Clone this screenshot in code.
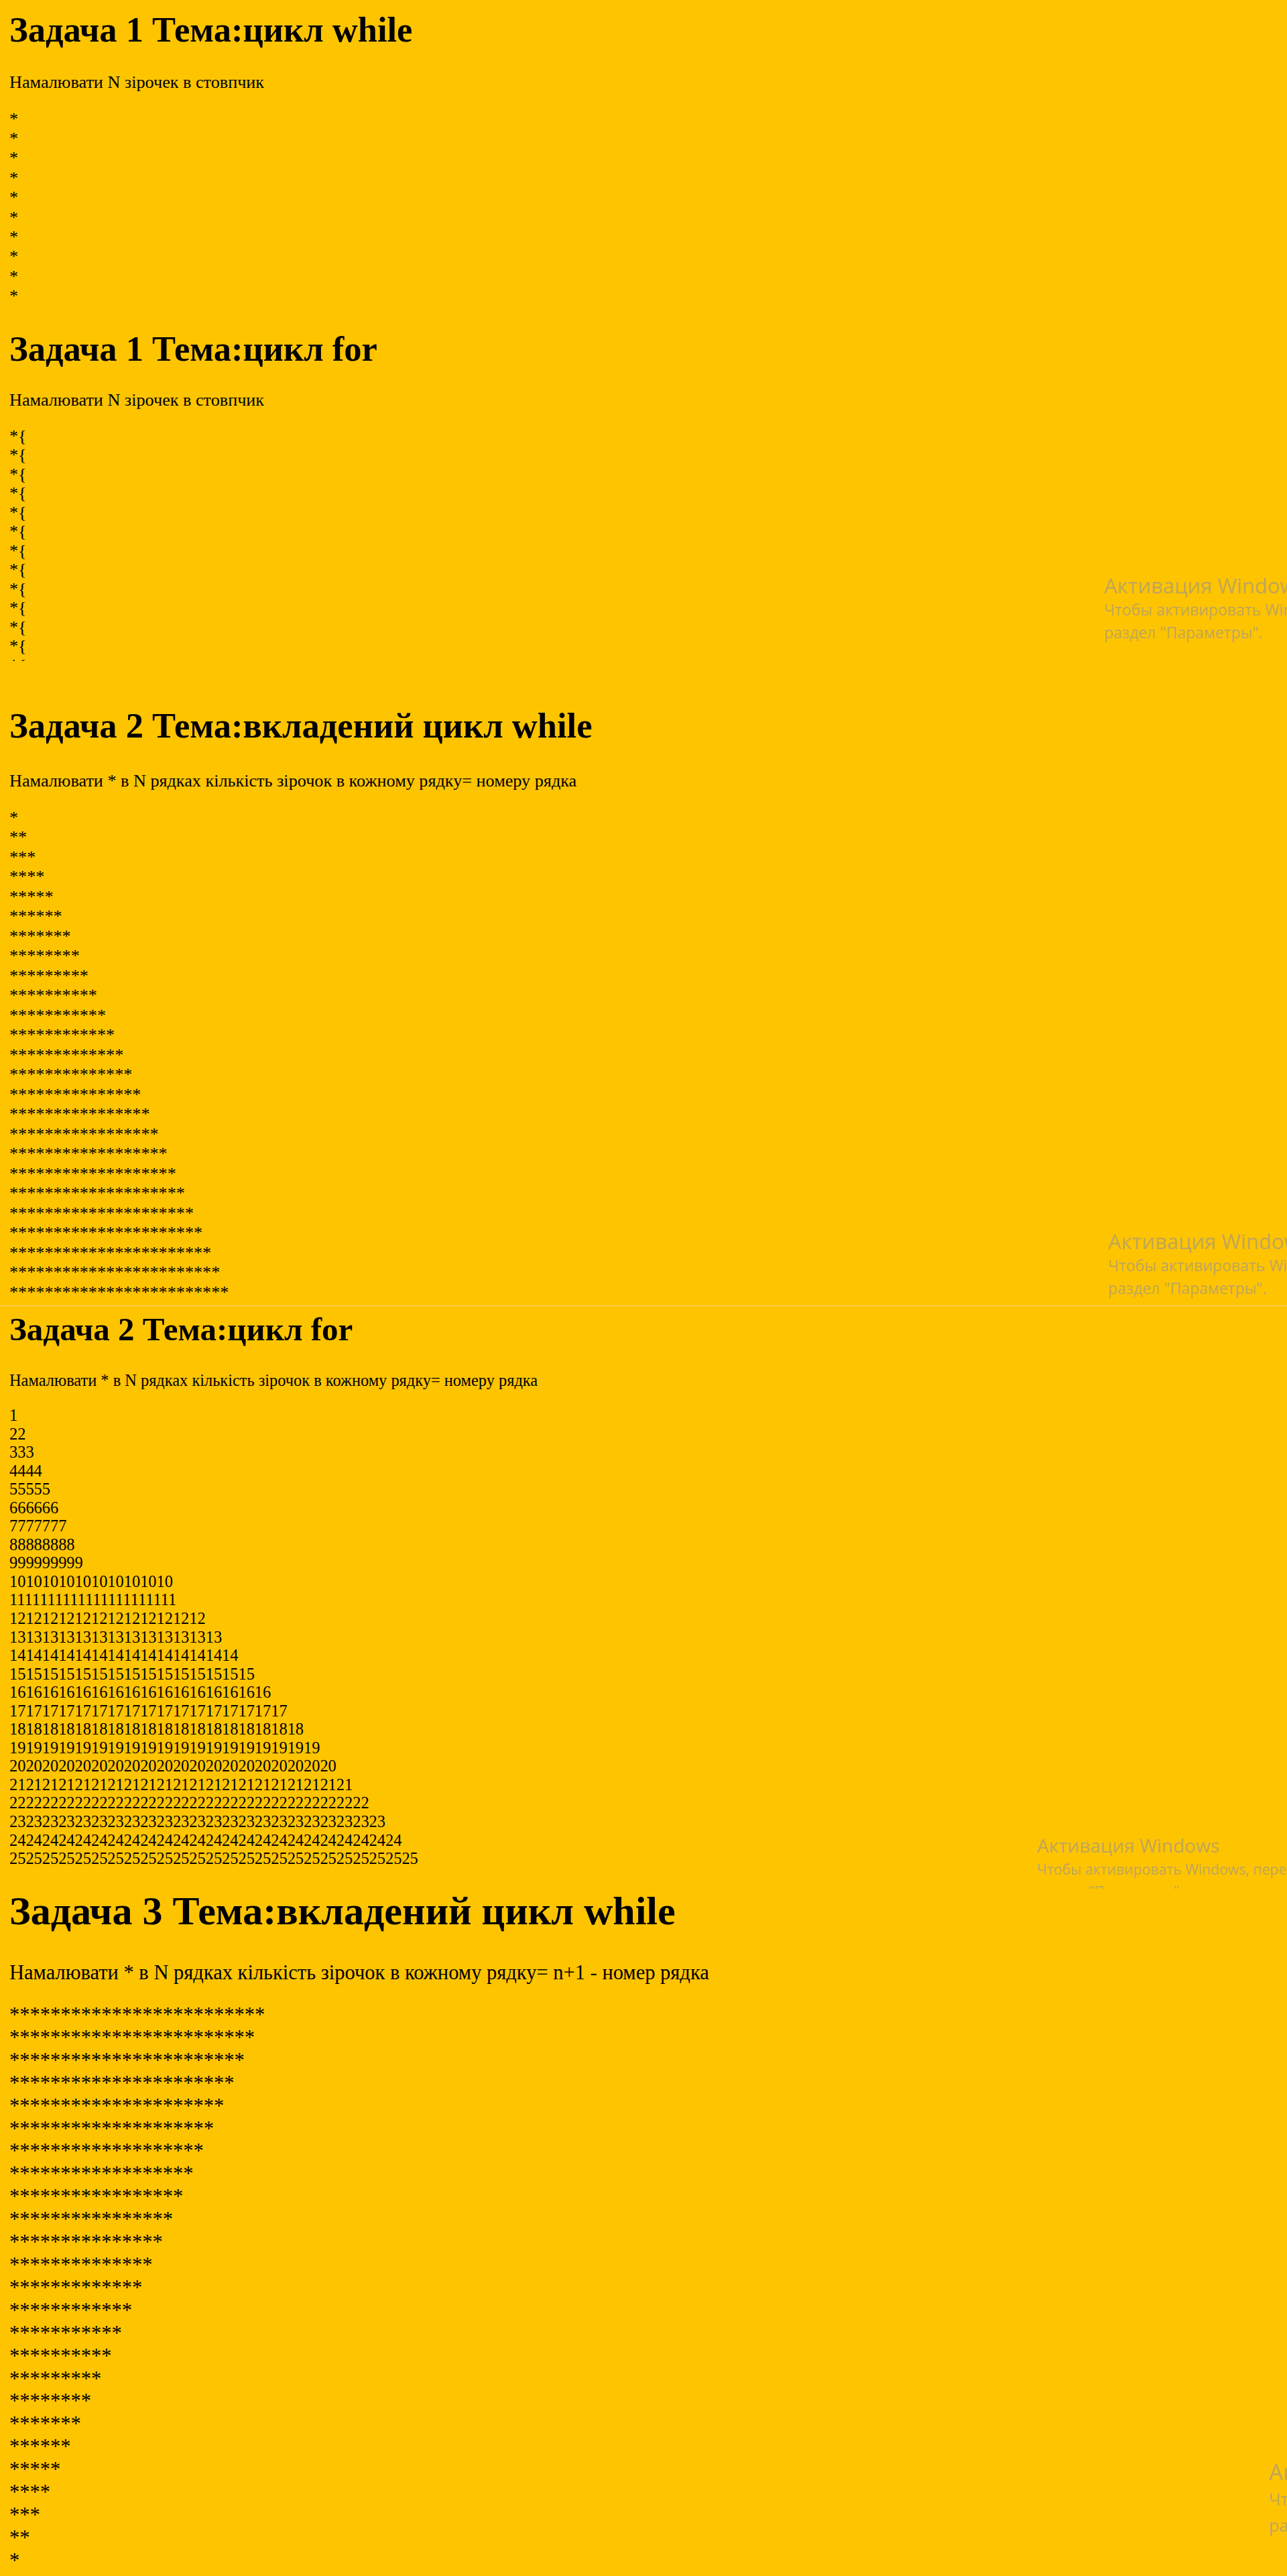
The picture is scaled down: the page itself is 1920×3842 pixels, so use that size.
import type { ReactNode } from 'react'

const stars = (n: number) => '*'.repeat(n)

type TaskProps = {
  box: string
  title: string
  titleCls: string
  note: string
  noteCls: string
  lines: string[]
  linesCls: string
  children?: ReactNode
}

function Task({ box, title, titleCls, note, noteCls, lines, linesCls, children }: TaskProps) {
  return (
    <section className={`relative overflow-hidden pl-[14px] ${box}`}>
      <h1 className={`font-bold whitespace-nowrap ${titleCls}`}>{title}</h1>
      <p className={`whitespace-nowrap ${noteCls}`}>{note}</p>
      <div className={linesCls}>
        {lines.map((l, i) => (
          <div key={i} className="whitespace-nowrap">
            {l}
          </div>
        ))}
      </div>
      {children}
    </section>
  )
}

// the "activate windows" overlay that sits on top of the screenshots
function Watermark({ pos, head, body }: { pos: string; head: string; body: string }) {
  return (
    <div className={`absolute whitespace-nowrap text-[#bfa65c] font-['Open_Sans','Noto_Sans',sans-serif] ${pos}`}>
      <div className={head}>Активация Windows</div>
      <div className={body}>Чтобы активировать Windows, перейдите в</div>
      <div className={body}>раздел "Параметры".</div>
    </div>
  )
}

export default function App() {
  const range = Array.from({ length: 25 }, (_, i) => i + 1)

  return (
    <div className="w-[1920px] h-[3842px] overflow-hidden bg-[#ffc400] text-black font-['Liberation_Serif','Times_New_Roman',serif]">
      <Task
        box="h-[470px] pt-[14px]"
        title="Задача 1 Тема:цикл while"
        titleCls="text-[52.5px] leading-[60px]"
        note="Намалювати N зірочек в стовпчик"
        noteCls="mt-[34px] text-[26.2px] leading-[30px]"
        lines={Array.from({ length: 10 }, () => '*')}
        linesCls="mt-[24.6px] text-[26.2px] leading-[29.4px]"
      />

      <Task
        box="h-[516px] pt-[20px]"
        title="Задача 1 Тема:цикл for"
        titleCls="text-[52.5px] leading-[60px]"
        note="Намалювати N зірочек в стовпчик"
        noteCls="mt-[32px] text-[26.2px] leading-[30px]"
        lines={Array.from({ length: 13 }, () => '*{')}
        linesCls="mt-[24.5px] text-[26.2px] leading-[28.5px]"
      >
        <Watermark
          pos="top-[384px] left-[1647px]"
          head="text-[31px] leading-[38px]"
          body="text-[23px] leading-[34px]"
        />
      </Task>

      <Task
        box="h-[962px] pt-[66px] border-b border-[#ffd966]"
        title="Задача 2 Тема:вкладений цикл while"
        titleCls="text-[52.5px] leading-[60px]"
        note="Намалювати * в N рядках кількість зірочок в кожному рядку= номеру рядка"
        noteCls="mt-[37.5px] text-[26.2px] leading-[30px]"
        lines={range.map((i) => stars(i))}
        linesCls="mt-[25px] text-[26.2px] leading-[29.5px]"
      >
        <Watermark
          pos="top-[846px] left-[1653px]"
          head="text-[31px] leading-[38px]"
          body="text-[23px] leading-[34px]"
        />
      </Task>

      <Task
        box="h-[869px] pt-[6.5px]"
        title="Задача 2 Тема:цикл for"
        titleCls="text-[49px] leading-[56px]"
        note="Намалювати * в N рядках кількість зірочок в кожному рядку= номеру рядка"
        noteCls="mt-[34.3px] text-[24.4px] leading-[28px]"
        lines={range.map((i) => String(i).repeat(i))}
        linesCls="mt-[24.2px] text-[24.4px] leading-[27.55px]"
      >
        <Watermark
          pos="top-[786px] left-[1547px]"
          head="text-[28px] leading-[37px]"
          body="text-[21.2px] leading-[33px]"
        />
      </Task>

      <Task
        box="h-[1025px] pt-[0.75px]"
        title="Задача 3 Тема:вкладений цикл while"
        titleCls="text-[60px] leading-[64px]"
        note="Намалювати * в N рядках кількість зірочок в кожному рядку= n+1 - номер рядка"
        noteCls="mt-[43px] text-[30.5px] leading-[34px]"
        lines={range.map((i) => stars(26 - i))}
        linesCls="mt-[30.3px] text-[30.5px] leading-[33.9px]"
      >
        <Watermark
          pos="top-[849px] left-[1893px]"
          head="text-[33px] leading-[42px]"
          body="text-[25px] leading-[39px]"
        />
      </Task>
    </div>
  )
}
